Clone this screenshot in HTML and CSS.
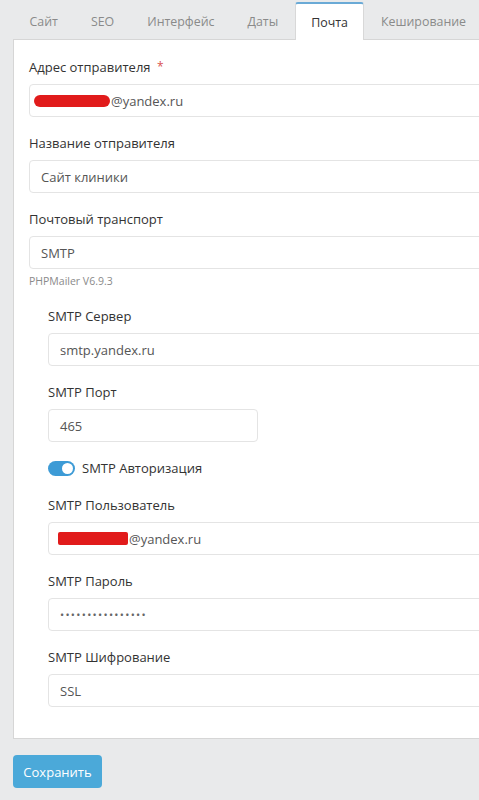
FILE: index.html
```html
<!DOCTYPE html>
<html lang="ru">
<head>
<meta charset="utf-8">
<title>Почта</title>
<link rel="stylesheet" href="styles.css">
</head>
<body>
<div class="page">
  <nav class="tabs">
    <span class="tab">Сайт</span>
    <span class="tab">SEO</span>
    <span class="tab">Интерфейс</span>
    <span class="tab">Даты</span>
    <span class="tab active">Почта</span>
    <span class="tab">Кеширование</span>
  </nav>
  <div class="card">
    <div class="group">
      <label class="label">Адрес отправителя <span class="req">*</span></label>
      <div class="input"><span class="redact r1"></span>@yandex.ru</div>
    </div>
    <div class="group">
      <label class="label">Название отправителя</label>
      <div class="input">Сайт клиники</div>
    </div>
    <div class="group">
      <label class="label">Почтовый транспорт</label>
      <div class="input">SMTP</div>
      <div class="help">PHPMailer V6.9.3</div>
    </div>
    <div class="sub">
      <div class="group">
        <label class="label">SMTP Сервер</label>
        <div class="input">smtp.yandex.ru</div>
      </div>
      <div class="group">
        <label class="label">SMTP Порт</label>
        <div class="input short">465</div>
      </div>
      <div class="switch-row">
        <span class="switch"><span class="knob"></span></span>
        <span class="switch-label">SMTP Авторизация</span>
      </div>
      <div class="group">
        <label class="label">SMTP Пользователь</label>
        <div class="input"><span class="redact r2"></span>@yandex.ru</div>
      </div>
      <div class="group">
        <label class="label">SMTP Пароль</label>
        <div class="input dots">••••••••••••••••</div>
      </div>
      <div class="group last">
        <label class="label">SMTP Шифрование</label>
        <div class="input">SSL</div>
      </div>
    </div>
  </div>
  <button class="btn">Сохранить</button>
</div>
</body>
</html>
```

FILE: styles.css
```css
html, body {
  margin: 0;
  padding: 0;
  overflow: hidden;
  background: #e9eaeb;
}
body {
  font-family: "Open Sans", "Liberation Sans", sans-serif;
  font-size: 13px;
  color: #333;
}
.page {
  width: 560px;
  padding: 2px 0 0 13px;
}
.tabs {
  display: flex;
  height: 37px;
}
.tab {
  display: flex;
  align-items: center;
  padding: 0 15.5px;
  color: #8a8a8a;
  font-size: 12.4px;
  border: 1px solid transparent;
  border-bottom: none;
  box-sizing: border-box;
}
.tab.active {
  background: #fff;
  color: #333;
  border-color: #d8d8d8;
  border-top: 2px solid #6aaad6;
  border-radius: 3px 3px 0 0;
  margin-bottom: -1px;
  height: 38px;
  position: relative;
  z-index: 1;
}
.card {
  background: #fff;
  border: 1px solid #d6d6d6;
  padding: 17px 0 15px 15px;
}
.sub {
  padding-left: 19px;
  padding-top: 1px;
}
.group {
  margin-bottom: 16px;
}
.label {
  display: block;
  line-height: 20px;
  margin-bottom: 7px;
  color: #333;
}
.req {
  color: #d9534f;
  margin-left: 3px;
  font-size: 12px;
  vertical-align: top;
}
.input {
  box-sizing: border-box;
  height: 33px;
  border: 1px solid #e4e4e4;
  border-radius: 4px;
  display: flex;
  align-items: center;
  padding: 0 11px;
  color: #555;
  background: #fff;
}
.input.short {
  width: 210px;
}
.dots {
  letter-spacing: 1.3px;
  font-size: 11px;
  color: #666;
}
.help {
  font-size: 10.5px;
  color: #8a8a8a;
  line-height: 16px;
  margin-top: 4px;
  margin-bottom: 1px;
}
.redact {
  display: inline-block;
  background: #e11b1b;
}
.r1 {
  width: 76px;
  height: 12px;
  border-radius: 6px;
  margin-left: -7px;
  margin-right: 1px;
}
.r2 {
  width: 70px;
  height: 13px;
  border-radius: 2px;
  margin-left: -2px;
  margin-right: 1px;
}
.switch-row {
  display: flex;
  align-items: center;
  height: 20px;
  margin-bottom: 17px;
}
.switch {
  width: 27px;
  height: 15px;
  border-radius: 8px;
  background: #3d9bd6;
  display: flex;
  align-items: center;
  justify-content: flex-end;
  padding: 0 2px;
  box-sizing: border-box;
  margin-right: 7px;
}
.knob {
  width: 11px;
  height: 11px;
  border-radius: 50%;
  background: #fff;
}
.btn {
  margin-top: 16px;
  height: 33px;
  width: 89px;
  border: none;
  border-radius: 4px;
  background: #4ba9d9;
  color: #fff;
  font-family: "Open Sans", "Liberation Sans", sans-serif;
  font-size: 13px;
  padding: 0;
}
```
